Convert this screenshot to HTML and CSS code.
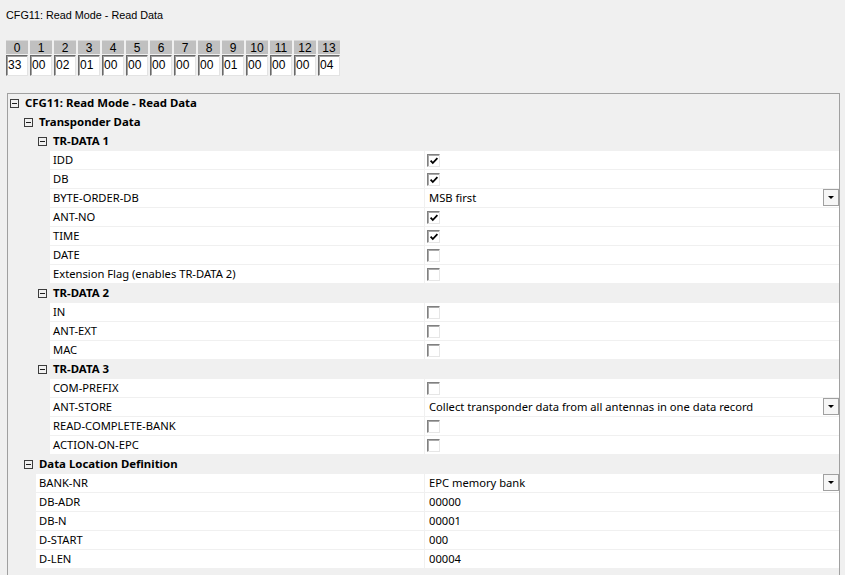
FILE: index.html
```html
<!DOCTYPE html>
<html>
<head>
<meta charset="utf-8">
<link rel="stylesheet" href="styles.css">
</head>
<body>
<div class="title">CFG11: Read Mode - Read Data</div>
<div class="bytes">
  <div class="byte"><div class="bh">0</div><div class="bv">33</div></div>
  <div class="byte"><div class="bh">1</div><div class="bv">00</div></div>
  <div class="byte"><div class="bh">2</div><div class="bv">02</div></div>
  <div class="byte"><div class="bh">3</div><div class="bv">01</div></div>
  <div class="byte"><div class="bh">4</div><div class="bv">00</div></div>
  <div class="byte"><div class="bh">5</div><div class="bv">00</div></div>
  <div class="byte"><div class="bh">6</div><div class="bv">00</div></div>
  <div class="byte"><div class="bh">7</div><div class="bv">00</div></div>
  <div class="byte"><div class="bh">8</div><div class="bv">00</div></div>
  <div class="byte"><div class="bh">9</div><div class="bv">01</div></div>
  <div class="byte"><div class="bh">10</div><div class="bv">00</div></div>
  <div class="byte"><div class="bh">11</div><div class="bv">00</div></div>
  <div class="byte"><div class="bh">12</div><div class="bv">00</div></div>
  <div class="byte"><div class="bh">13</div><div class="bv">04</div></div>
</div>

<div class="grid">
  <div class="cat l0"><span class="tog"></span>CFG11: Read Mode - Read Data</div>
  <div class="cat l1"><span class="tog"></span>Transponder Data</div>
  <div class="cat l2"><span class="tog"></span>TR-DATA 1</div>
  <div class="prop p3"><div class="name">IDD</div><div class="val"><span class="cb on"><svg viewBox="0 0 10 10"><path d="M1.6 4.6 L3.8 7 L8.4 2.2"/></svg></span></div></div>
  <div class="prop p3"><div class="name">DB</div><div class="val"><span class="cb on"><svg viewBox="0 0 10 10"><path d="M1.6 4.6 L3.8 7 L8.4 2.2"/></svg></span></div></div>
  <div class="prop p3"><div class="name">BYTE-ORDER-DB</div><div class="val"><span class="txt">MSB first</span><span class="dd"><span class="arr"></span></span></div></div>
  <div class="prop p3"><div class="name">ANT-NO</div><div class="val"><span class="cb on"><svg viewBox="0 0 10 10"><path d="M1.6 4.6 L3.8 7 L8.4 2.2"/></svg></span></div></div>
  <div class="prop p3"><div class="name">TIME</div><div class="val"><span class="cb on"><svg viewBox="0 0 10 10"><path d="M1.6 4.6 L3.8 7 L8.4 2.2"/></svg></span></div></div>
  <div class="prop p3"><div class="name">DATE</div><div class="val"><span class="cb"></span></div></div>
  <div class="prop p3"><div class="name">Extension Flag (enables TR-DATA 2)</div><div class="val"><span class="cb"></span></div></div>
  <div class="cat l2"><span class="tog"></span>TR-DATA 2</div>
  <div class="prop p3"><div class="name">IN</div><div class="val"><span class="cb"></span></div></div>
  <div class="prop p3"><div class="name">ANT-EXT</div><div class="val"><span class="cb"></span></div></div>
  <div class="prop p3"><div class="name">MAC</div><div class="val"><span class="cb"></span></div></div>
  <div class="cat l2"><span class="tog"></span>TR-DATA 3</div>
  <div class="prop p3"><div class="name">COM-PREFIX</div><div class="val"><span class="cb"></span></div></div>
  <div class="prop p3"><div class="name">ANT-STORE</div><div class="val"><span class="txt">Collect transponder data from all antennas in one data record</span><span class="dd"><span class="arr"></span></span></div></div>
  <div class="prop p3"><div class="name">READ-COMPLETE-BANK</div><div class="val"><span class="cb"></span></div></div>
  <div class="prop p3"><div class="name">ACTION-ON-EPC</div><div class="val"><span class="cb"></span></div></div>
  <div class="cat l1"><span class="tog"></span>Data Location Definition</div>
  <div class="prop p2"><div class="name">BANK-NR</div><div class="val"><span class="txt">EPC memory bank</span><span class="dd"><span class="arr"></span></span></div></div>
  <div class="prop p2"><div class="name">DB-ADR</div><div class="val"><span class="txt">00000</span></div></div>
  <div class="prop p2"><div class="name">DB-N</div><div class="val"><span class="txt">00001</span></div></div>
  <div class="prop p2"><div class="name">D-START</div><div class="val"><span class="txt">000</span></div></div>
  <div class="prop p2"><div class="name">D-LEN</div><div class="val"><span class="txt">00004</span></div></div>
</div>
</body>
</html>
```

FILE: styles.css
```css
html, body {
  margin: 0;
  padding: 0;
  background: #f0f0f0;
  overflow: hidden;
  height: 575px;
}

body {
  font-family: "Noto Sans", "Liberation Sans", sans-serif;
  color: #000;
}

.title {
  font-family: "Liberation Sans", Arial, sans-serif;
  font-size: 10.8px;
  line-height: 14px;
  padding: 8px 0 0 6px;
  height: 14px;
}

.bytes {
  display: flex;
  gap: 2px;
  margin: 18px 0 0 6px;
  font-family: "Liberation Sans", Arial, sans-serif;
  font-size: 12px;
}

.byte {
  width: 22px;
  display: flex;
  flex-direction: column;
}

.bh {
  height: 13px;
  line-height: 14px;
  background: #c0c0c0;
  border-top: 1px solid #d8d8d8;
  text-align: center;
  margin-bottom: 1px;
}

.bv {
  height: 19px;
  line-height: 19px;
  background: #fff;
  border-top: 1px solid #696969;
  border-left: 1px solid #696969;
  border-right: 1px solid #e3e3e3;
  border-bottom: 1px solid #e3e3e3;
  box-shadow: inset 1px 1px 0 #a0a0a0;
  padding-left: 1px;
  box-sizing: content-box;
  width: 19px;
}

.grid {
  margin: 17px 0 0 7px;
  width: 831px;
  height: 500px;
  border: 1px solid #a0a0a0;
  border-bottom: none;
  background: #f0f0f0;
  display: flex;
  flex-direction: column;
  gap: 1px;
  font-size: 11.2px;
}

.cat {
  height: 18px;
  line-height: 18px;
  font-weight: bold;
  font-size: 11.4px;
  display: flex;
  align-items: center;
}

.cat.l0 { padding-left: 2px; }
.cat.l1 { padding-left: 16px; }
.cat.l2 { padding-left: 30px; }

.tog {
  width: 7px;
  height: 7px;
  border: 1px solid #3c3c3c;
  margin-right: 6px;
  position: relative;
  flex: none;
}

.tog::after {
  content: "";
  position: absolute;
  left: 1px;
  right: 1px;
  top: 3px;
  height: 1px;
  background: #1e1e1e;
}

.prop {
  height: 18px;
  display: flex;
}

.prop.p3 { margin-left: 42px; }
.prop.p2 { margin-left: 28px; }

.name {
  flex: 1;
  background: #fff;
  line-height: 17px;
  padding-left: 3px;
  white-space: nowrap;
}

.val {
  flex: none;
  background: #fff;
  border-left: 1px solid #f0f0f0;
  display: flex;
  align-items: flex-start;
  position: relative;
  padding-left: 2px;
  box-sizing: border-box;
  width: 415px;
}

.txt {
  line-height: 17px;
  padding-left: 2px;
  white-space: nowrap;
}

.cb {
  width: 11px;
  height: 11px;
  border-top: 1px solid #808080;
  border-left: 1px solid #808080;
  border-right: 1px solid #e6e6e6;
  border-bottom: 1px solid #e6e6e6;
  box-shadow: inset 1px 1px 0 #a9a9a9;
  background: #fff;
  display: block;
  margin-top: 3px;
}

.cb svg {
  display: block;
  width: 10px;
  height: 10px;
  margin: 1px 0 0 1px;
}

.cb svg path {
  fill: none;
  stroke: #000;
  stroke-width: 1.8;
}

.dd {
  position: absolute;
  right: 0;
  top: 0;
  width: 14px;
  height: 15px;
  border: 1px solid #a0a0a0;
  background: #f6f6f6;
  display: flex;
  align-items: center;
  justify-content: center;
}

.arr {
  width: 0;
  height: 0;
  border-left: 3px solid transparent;
  border-right: 3px solid transparent;
  border-top: 3px solid #000;
}
```
